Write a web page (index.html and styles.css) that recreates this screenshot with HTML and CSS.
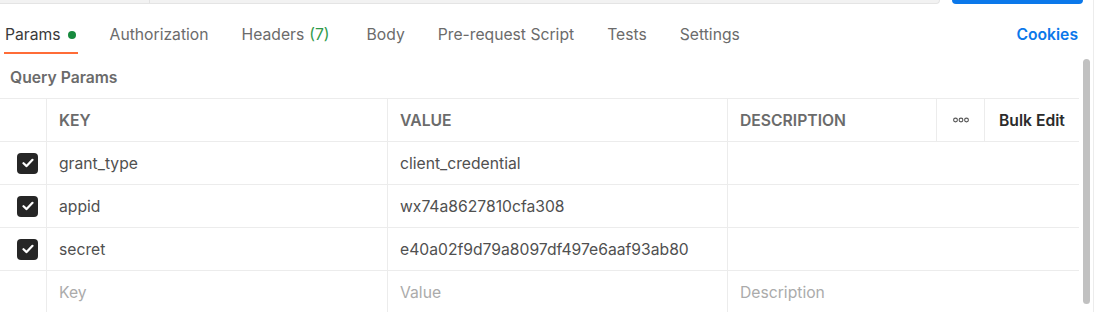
FILE: index.html
```html
<!DOCTYPE html>
<html>
<head>
<meta charset="utf-8">
<link rel="stylesheet" href="styles.css">
</head>
<body>
<div class="page">
  <div class="topbar">
    <div class="url-input"><div class="method"></div><div class="url"></div></div>
    <div class="send"></div>
  </div>
  <div class="main">
    <div class="content">
      <div class="tabs">
        <div class="tab active">Params <span class="dot"></span></div>
        <div class="tab">Authorization</div>
        <div class="tab headers">Headers <span class="count">(7)</span></div>
        <div class="tab">Body</div>
        <div class="tab">Pre-request Script</div>
        <div class="tab">Tests</div>
        <div class="tab">Settings</div>
        <div class="spacer"></div>
        <div class="cookies">Cookies</div>
      </div>
      <div class="section-title">Query Params</div>
      <div class="table">
        <div class="row head">
          <div class="cell check"></div>
          <div class="cell">KEY</div>
          <div class="cell">VALUE</div>
          <div class="cell">DESCRIPTION</div>
          <div class="cell dots">
            <svg width="16" height="6" viewBox="0 0 16 6"><circle cx="2.5" cy="3" r="1.9" fill="none" stroke="#555" stroke-width="1.1"/><circle cx="8" cy="3" r="1.9" fill="none" stroke="#555" stroke-width="1.1"/><circle cx="13.5" cy="3" r="1.9" fill="none" stroke="#555" stroke-width="1.1"/></svg>
          </div>
          <div class="cell bulk">Bulk Edit</div>
        </div>
        <div class="row">
          <div class="cell check"><span class="box"><svg width="12" height="10" viewBox="0 0 12 10"><path d="M1.5 5.2 L4.6 8.1 L10.5 1.8" fill="none" stroke="#fff" stroke-width="2.2" stroke-linecap="round" stroke-linejoin="round"/></svg></span></div>
          <div class="cell">grant_type</div>
          <div class="cell">client_credential</div>
          <div class="cell wide"></div>
        </div>
        <div class="row">
          <div class="cell check"><span class="box"><svg width="12" height="10" viewBox="0 0 12 10"><path d="M1.5 5.2 L4.6 8.1 L10.5 1.8" fill="none" stroke="#fff" stroke-width="2.2" stroke-linecap="round" stroke-linejoin="round"/></svg></span></div>
          <div class="cell">appid</div>
          <div class="cell">wx74a8627810cfa308</div>
          <div class="cell wide"></div>
        </div>
        <div class="row">
          <div class="cell check"><span class="box"><svg width="12" height="10" viewBox="0 0 12 10"><path d="M1.5 5.2 L4.6 8.1 L10.5 1.8" fill="none" stroke="#fff" stroke-width="2.2" stroke-linecap="round" stroke-linejoin="round"/></svg></span></div>
          <div class="cell">secret</div>
          <div class="cell">e40a02f9d79a8097df497e6aaf93ab80</div>
          <div class="cell wide"></div>
        </div>
        <div class="row last">
          <div class="cell check"></div>
          <div class="cell ph">Key</div>
          <div class="cell ph">Value</div>
          <div class="cell wide ph">Description</div>
        </div>
      </div>
    </div>
    <div class="gutter"><div class="thumb"></div></div>
  </div>
</div>
</body>
</html>
```

FILE: styles.css
```css
* { box-sizing: border-box; }
html, body { margin: 0; padding: 0; background: #fff; }
body {
  font-family: Inter, "Noto Sans", "Liberation Sans", sans-serif;
  font-size: 15.7px;
  color: #505050;
  overflow: hidden;
}
.page {
  width: 1094px;
  height: 312px;
  border-right: 1px solid #ececec;
}
.topbar {
  display: flex;
  height: 4px;
}
.url-input {
  width: 940px;
  height: 4px;
  display: flex;
  background: #f2f2f2;
  border-bottom: 1px solid #e4e4e4;
  border-right: 1px solid #e4e4e4;
  border-bottom-right-radius: 4px;
}
.method { width: 150px; border-right: 1px solid #e2e2e2; }
.url { flex: 1; }
.send {
  margin-left: 12px;
  width: 131px;
  height: 4px;
  background: #0b78ea;
  border-bottom-left-radius: 4px;
  border-bottom-right-radius: 4px;
}
.main {
  display: flex;
}
.content {
  width: 1079px;
}
.tabs {
  display: flex;
  height: 50px;
  padding-left: 4px;
}
.tab {
  padding: 21px 1px 0;
  line-height: 20px;
  height: 50px;
  margin-right: 31px;
  color: #6b6b6b;
  border-bottom: 2px solid transparent;
  white-space: nowrap;
  display: flex;
  align-items: flex-start;
}
.tab.headers { margin-right: 35px; }
.tab.active {
  color: #3a3a3a;
  border-bottom-color: #ff6c37;
  padding-right: 2px;
}
.dot {
  display: inline-block;
  width: 8px;
  height: 8px;
  border-radius: 50%;
  background: #178a3e;
  margin: 6px 0 0 7px;
}
.count { color: #2f9a4a; margin-left: 5px; }
.spacer { flex: 1; }
.cookies {
  padding-top: 21px;
  line-height: 20px;
  color: #0b78ea;
  font-weight: 600;
  margin-right: 1px;
}
.section-title {
  height: 44px;
  display: flex;
  align-items: center;
  padding-left: 10px;
  padding-top: 2px;
  font-weight: 600;
  color: #6b6b6b;
}
.table {
  border-top: 1px solid #ececec;
}
.row {
  display: grid;
  grid-template-columns: 46px 341px 340px 209px 48px 95px;
  height: 43px;
  border-bottom: 1px solid #ececec;
}
.row:not(.head) { grid-template-columns: 46px 341px 340px 352px; }
.row.last { border-bottom: none; }
.cell {
  display: flex;
  align-items: center;
  padding-left: 12px;
  border-left: 1px solid #ececec;
  white-space: nowrap;
}
.cell.check {
  border-left: none;
  padding-left: 17px;
}
.head .cell {
  font-weight: 600;
  color: #6b6b6b;
}
.head .cell.dots { justify-content: center; padding-left: 0; }
.head .cell.bulk { color: #2b2b2b; padding-left: 14px; }
.box {
  width: 21px;
  height: 21px;
  border-radius: 4px;
  background: #262626;
  display: flex;
  align-items: center;
  justify-content: center;
}
.ph { color: #ababab; }
.gutter {
  width: 14px;
  padding-top: 55px;
  padding-left: 4px;
}
.thumb {
  width: 7px;
  height: 245px;
  border-radius: 4px;
  background: #c1c1c1;
}
```
